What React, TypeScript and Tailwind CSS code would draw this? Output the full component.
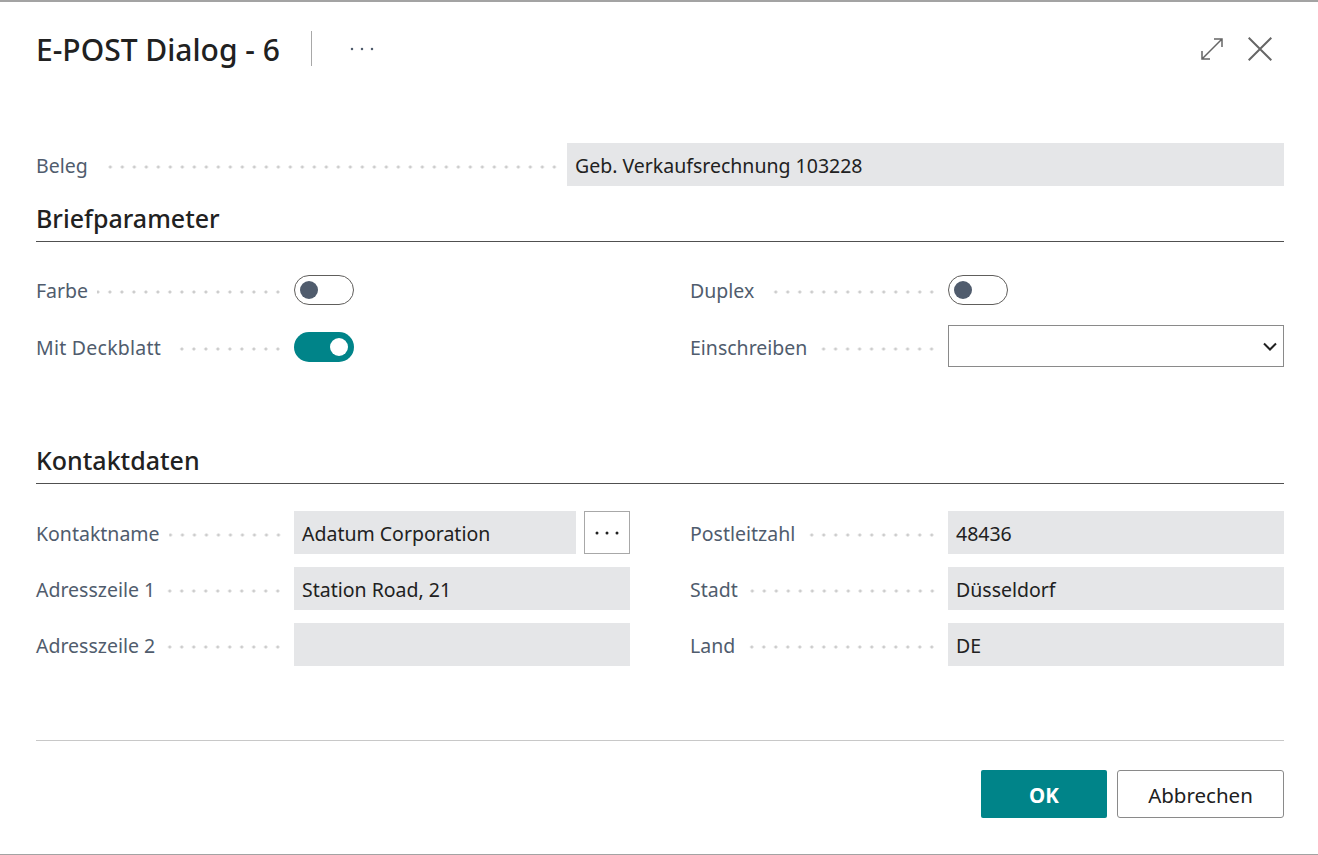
import React from "react";

const Label = ({
  text,
  className = "pt-[2px]",
  leader = "ml-[9px] mr-[10px]",
}: {
  text: string;
  className?: string;
  leader?: string;
}) => (
  <div className={`flex items-center flex-1 min-w-0 h-full ${className}`}>
    <span className="text-[#505c6d] whitespace-nowrap">{text}</span>
    <div className={`flex-1 h-[4px] mt-[2px] bg-[radial-gradient(circle,#cccccc_1.3px,transparent_1.8px)] bg-[length:12px_4px] bg-repeat-x bg-right ${leader}`} />
  </div>
);

const Value = ({ text, className = "" }: { text?: string; className?: string }) => (
  <div className={`h-[43px] bg-[#e5e6e8] px-2 pt-[3px] flex items-center text-[#212121] ${className}`}>{text}</div>
);

const Toggle = ({ on }: { on?: boolean }) =>
  on ? (
    <div className="w-[60px] h-[30px] mt-[2px] rounded-full bg-[#008489] flex items-center justify-end pr-[6px]">
      <div className="w-[18px] h-[18px] rounded-full bg-white" />
    </div>
  ) : (
    <div className="w-[60px] h-[30px] rounded-full border border-[#605e5c] flex items-center pl-[5px]">
      <div className="w-[18px] h-[18px] rounded-full bg-[#505c6d]" />
    </div>
  );

const Heading = ({ text }: { text: string }) => (
  <div className="h-[40px] border-b border-[#505050] flex items-start pt-[1px]">
    <h2 className="text-[25px] leading-[30px] font-medium text-[#212121]">{text}</h2>
  </div>
);

const Row = ({
  label,
  children,
  labelClass,
  leader,
  h = "h-[42px]",
}: {
  label: string;
  children: React.ReactNode;
  labelClass?: string;
  leader?: string;
  h?: string;
}) => (
  <div className={`flex items-center ${h}`}>
    <Label text={label} className={labelClass} leader={leader} />
    <div className="w-[336px] shrink-0">{children}</div>
  </div>
);

export default function App() {
  return (
    <div
      className="w-[1318px] h-[855px] bg-white overflow-hidden border-t-2 border-b border-t-[#a3a3a3] border-b-[#a3a3a3] text-[19.5px] flex flex-col pl-[36px] pr-[34px]"
      style={{ fontFamily: '"Noto Sans", "Open Sans", sans-serif' }}
    >
      <header className="flex items-center h-[34px] mt-[29px] shrink-0">
        <h1 className="text-[30px] leading-[34px] pt-[4px] font-medium text-[#212121] whitespace-nowrap">E-POST Dialog - 6</h1>
        <div className="w-px h-[35px] bg-[#a8a8a8] ml-[31px]" />
        <svg className="ml-[38px] mt-[2px]" width="24" height="6" viewBox="0 0 24 6" fill="#505c6d">
          <circle cx="2" cy="3" r="1.25" />
          <circle cx="12" cy="3" r="1.25" />
          <circle cx="22" cy="3" r="1.25" />
        </svg>
        <div className="ml-auto flex items-center mr-[12px] mt-[2px] gap-[25px]">
          <svg width="22" height="22" viewBox="0 0 22 22" fill="none" stroke="#666" strokeWidth="1.5">
            <path d="M1 21 21 1M13 1H21V9M1 13V21H9" />
          </svg>
          <svg width="24" height="24" viewBox="0 0 24 24" fill="none" stroke="#666" strokeWidth="2">
            <path d="M.7.7 23.3 23.3M23.3.7.7 23.3" />
          </svg>
        </div>
      </header>

      <section className="mt-[78px] flex items-center h-[43px] shrink-0">
        <div className="flex items-center w-[531px] shrink-0 h-full">
          <Label text="Beleg" leader="ml-[20px] mr-[7px]" />
        </div>
        <Value text="Geb. Verkaufsrechnung 103228" className="flex-1" />
      </section>

      <section className="mt-[16px] shrink-0">
        <Heading text="Briefparameter" />
        <div className="grid grid-cols-2 gap-x-[60px] mt-[27px]">
          <div className="flex flex-col gap-[14px]">
            <Row label="Farbe">
              <Toggle />
            </Row>
            <Row label="Mit Deckblatt" labelClass="pt-[4px] tracking-[0.25px]" leader="ml-[15px] mr-[10px]">
              <Toggle on />
            </Row>
          </div>
          <div className="flex flex-col gap-[14px]">
            <Row label="Duplex" leader="ml-[15px] mr-[10px]">
              <Toggle />
            </Row>
            <Row label="Einschreiben" labelClass="pt-[4px]">
              <div className="h-[42px] border border-[#8a8a8a] flex items-center justify-end pr-[6px]">
                <svg width="14" height="9" viewBox="0 0 14 9" fill="none" stroke="#212121" strokeWidth="2">
                  <path d="M1 1.5 7 7.5 13 1.5" />
                </svg>
              </div>
            </Row>
          </div>
        </div>
      </section>

      <section className="mt-[77px] shrink-0">
        <Heading text="Kontaktdaten" />
        <div className="grid grid-cols-2 gap-x-[60px] mt-[27px]">
          <div className="flex flex-col gap-[13px]">
            <Row label="Kontaktname" h="h-[43px]">
              <div className="flex gap-[8px]">
                <Value text="Adatum Corporation" className="flex-1" />
                <div className="w-[46px] h-[43px] border border-[#a8a8a8] flex items-center justify-center">
                  <svg width="24" height="4" viewBox="0 0 24 4" fill="#212121">
                    <circle cx="2" cy="2" r="1.5" />
                    <circle cx="12" cy="2" r="1.5" />
                    <circle cx="22" cy="2" r="1.5" />
                  </svg>
                </div>
              </div>
            </Row>
            <Row label="Adresszeile 1" h="h-[43px]">
              <Value text="Station Road, 21" />
            </Row>
            <Row label="Adresszeile 2" h="h-[43px]">
              <Value />
            </Row>
          </div>
          <div className="flex flex-col gap-[13px]">
            <Row label="Postleitzahl" h="h-[43px]">
              <Value text="48436" />
            </Row>
            <Row label="Stadt" h="h-[43px]">
              <Value text="Düsseldorf" />
            </Row>
            <Row label="Land" h="h-[43px]">
              <Value text="DE" />
            </Row>
          </div>
        </div>
      </section>

      <footer className="mt-[74px] border-t border-[#c8c8c8] pt-[29px] flex justify-end gap-[10px] shrink-0">
        <button className="w-[126px] h-[48px] pt-[2px] rounded-[2px] bg-[#008489] text-white text-[20.5px] font-bold">OK</button>
        <button className="w-[167px] h-[48px] pt-[2px] rounded-[3px] border border-[#8a8a8a] text-[#212121] text-[20.5px] bg-white">Abbrechen</button>
      </footer>
    </div>
  );
}
